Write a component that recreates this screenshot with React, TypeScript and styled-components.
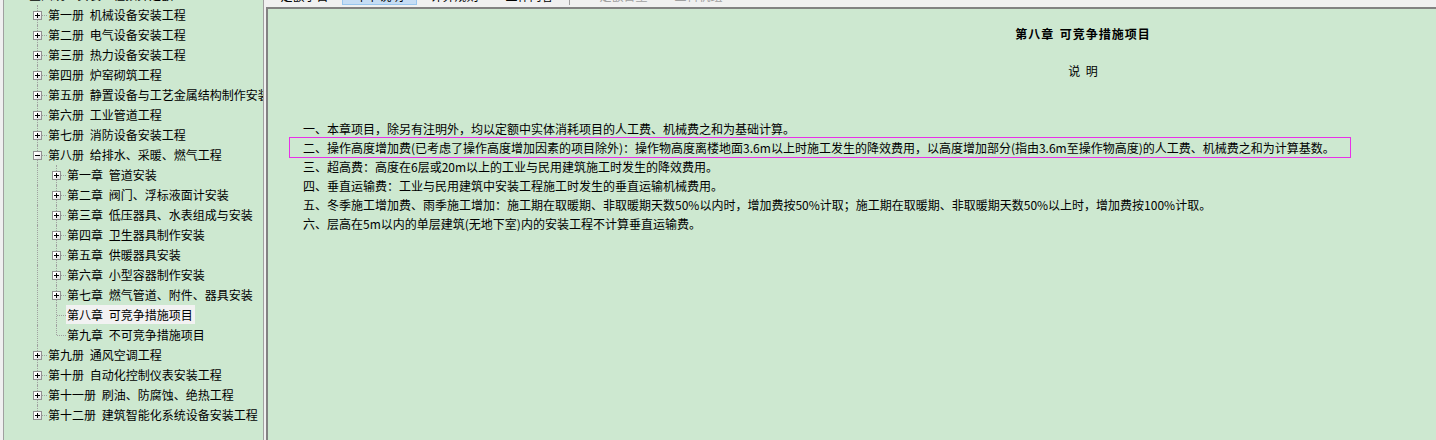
import styled, { createGlobalStyle, css } from 'styled-components';

type TreeNode = {
  label: string,
  children?: TreeNode[],
  open?: boolean,
  selected?: boolean,
};

type FlatRow = {
  node: TreeNode,
  depth: number,
  guides: boolean[],
  last: boolean,
};

const tree: TreeNode = {
  label: '全国统一安装工程预算定额',
  open: true,
  children: [
    { label: '第一册 机械设备安装工程', children: [] },
    { label: '第二册 电气设备安装工程', children: [] },
    { label: '第三册 热力设备安装工程', children: [] },
    { label: '第四册 炉窑砌筑工程', children: [] },
    { label: '第五册 静置设备与工艺金属结构制作安装工程', children: [] },
    { label: '第六册 工业管道工程', children: [] },
    { label: '第七册 消防设备安装工程', children: [] },
    {
      label: '第八册 给排水、采暖、燃气工程',
      open: true,
      children: [
        { label: '第一章 管道安装', children: [] },
        { label: '第二章 阀门、浮标液面计安装', children: [] },
        { label: '第三章 低压器具、水表组成与安装', children: [] },
        { label: '第四章 卫生器具制作安装', children: [] },
        { label: '第五章 供暖器具安装', children: [] },
        { label: '第六章 小型容器制作安装', children: [] },
        { label: '第七章 燃气管道、附件、器具安装', children: [] },
        { label: '第八章 可竞争措施项目', selected: true },
        { label: '第九章 不可竞争措施项目' },
      ],
    },
    { label: '第九册 通风空调工程', children: [] },
    { label: '第十册 自动化控制仪表安装工程', children: [] },
    { label: '第十一册 刷油、防腐蚀、绝热工程', children: [] },
    { label: '第十二册 建筑智能化系统设备安装工程', children: [] },
  ],
};

const tabs = [
  { label: '定额子目' },
  { label: '章节说明', active: true },
  { label: '计算规则' },
  { label: '工作内容' },
];

const disabledTabs = ['定额含量', '工料机组'];

const notes = [
  '一、本章项目，除另有注明外，均以定额中实体消耗项目的人工费、机械费之和为基础计算。',
  '二、操作高度增加费(已考虑了操作高度增加因素的项目除外)：操作物高度离楼地面3.6m以上时施工发生的降效费用，以高度增加部分(指由3.6m至操作物高度)的人工费、机械费之和为计算基数。',
  '三、超高费：高度在6层或20m以上的工业与民用建筑施工时发生的降效费用。',
  '四、垂直运输费：工业与民用建筑中安装工程施工时发生的垂直运输机械费用。',
  '五、冬季施工增加费、雨季施工增加：施工期在取暖期、非取暖期天数50%以内时，增加费按50%计取；施工期在取暖期、非取暖期天数50%以上时，增加费按100%计取。',
  '六、层高在5m以内的单层建筑(无地下室)内的安装工程不计算垂直运输费。',
];

function flatten(node: TreeNode, depth: number, guides: boolean[], last: boolean, out: FlatRow[]) {
  out.push({ node, depth, guides, last });
  if (node.open && node.children) {
    node.children.forEach((child, i) => {
      const childLast = i === node.children!.length - 1;
      flatten(child, depth + 1, depth === 0 ? [false] : [...guides, !last], childLast, out);
    });
  }
  return out;
}

export default function App() {
  const rows = flatten(tree, 0, [], true, []);

  return (
    <Screen>
      <GlobalStyle />
      <TreePane>
        <TreeScroll>
          {rows.map((r) => (
            <Row key={r.node.label}>
              {r.guides.map((g, i) => (
                <Guide key={`g-${i}`} $line={g} />
              ))}
              <Connector $last={r.last} $bare={r.depth === 0}>
                {r.node.children && <Expander $open={!!r.node.open} />}
              </Connector>
              <Label $selected={!!r.node.selected}>{r.node.label}</Label>
            </Row>
          ))}
        </TreeScroll>
      </TreePane>
      <Main>
        <Toolbar>
          {tabs.map((t) => (
            <Tab key={t.label} $active={!!t.active}>{t.label}</Tab>
          ))}
          <Separator />
          {disabledTabs.map((t) => (
            <Tab key={t} $disabled>{t}</Tab>
          ))}
        </Toolbar>
        <Content>
          <Document>
            <Heading>第八章 可竞争措施项目</Heading>
            <SubHeading>说 明</SubHeading>
            <NoteList>
              {notes.map((n, i) => (
                <Note key={`note-${i}`} $focused={i === 1}>{n}</Note>
              ))}
            </NoteList>
          </Document>
        </Content>
      </Main>
    </Screen>
  );
}

const GlobalStyle = createGlobalStyle`
  html, body {
    margin:0;
    padding:0;
    overflow:hidden;
    background:#f0f0f0;
  }
  body {
    font-family: "Noto Sans CJK SC", "Liberation Sans", sans-serif;
    font-size:12px;
    color:#000;
  }
`;

const Screen = styled.div`
  display:flex;
  height:440px;
  width:1436px;
  background:#f0f0f0;
  overflow:hidden;
`;

const TreePane = styled.div`
  margin-left:3px;
  width:259px;
  flex-shrink:0;
  height:440px;
  background:#cde8d0;
  border-left:1px solid #a0a0a0;
  border-right:1px solid #a0a0a0;
  overflow:hidden;
`;

const TreeScroll = styled.div`
  margin-top:-15px;
  margin-left:-4px;
`;

const Row = styled.div`
  display:flex;
  align-items:flex-start;
  height:20px;
  padding-left:9px;
  white-space:nowrap;
`;

const dotted = '1px dotted #a0a0a0';

const Guide = styled.span<{ $line: boolean }>`
  position:relative;
  flex:0 0 19px;
  height:20px;
  ${(p) => p.$line && css`
    &::before {
      content:'';
      position:absolute;
      left:9px;
      top:0;
      bottom:0;
      border-left:${dotted};
    }
  `}
`;

const Connector = styled.span<{ $last: boolean, $bare: boolean }>`
  position:relative;
  flex:0 0 19px;
  height:20px;
  ${(p) => !p.$bare && css`
    &::before {
      content:'';
      position:absolute;
      left:9px;
      top:0;
      height:${p.$last ? '10px' : '20px'};
      border-left:${dotted};
    }
    &::after {
      content:'';
      position:absolute;
      left:10px;
      right:0;
      top:10px;
      border-top:${dotted};
    }
  `}
`;

const Expander = styled.span<{ $open: boolean }>`
  position:absolute;
  z-index:1;
  left:5px;
  top:6px;
  width:9px;
  height:9px;
  box-sizing:border-box;
  border:1px solid #919191;
  background:linear-gradient(135deg, #ffffff 30%, #dcdcdc);
  &::before {
    content:'';
    position:absolute;
    left:1px;
    top:3px;
    width:5px;
    height:1px;
    background:#000;
  }
  ${(p) => !p.$open && css`
    &::after {
      content:'';
      position:absolute;
      left:3px;
      top:1px;
      width:1px;
      height:5px;
      background:#000;
    }
  `}
`;

const Label = styled.span<{ $selected: boolean }>`
  height:19px;
  line-height:19px;
  padding:0 2px 0 1px;
  word-spacing:3px;
  background:${(p) => (p.$selected ? '#f2f2f2' : 'transparent')};
`;

const Main = styled.div`
  flex:1;
  display:flex;
  flex-direction:column;
  margin-left:2px;
  min-width:0;
`;

const Toolbar = styled.div`
  height:7px;
  box-sizing:border-box;
  padding-bottom:2px;
  display:flex;
  align-items:flex-end;
  overflow:hidden;
  flex-shrink:0;
`;

const Tab = styled.div<{ $active?: boolean, $disabled?: boolean }>`
  flex:0 0 75px;
  height:21px;
  box-sizing:border-box;
  display:flex;
  align-items:flex-end;
  justify-content:center;
  padding-bottom:1px;
  line-height:14px;
  color:${(p) => (p.$disabled ? '#a0a0a0' : '#000')};
  border:1px solid ${(p) => (p.$active ? '#99c6ee' : 'transparent')};
  background:${(p) => (p.$active ? '#c6ddf4' : 'transparent')};
  &:first-child {
    margin-left:1px;
  }
`;

const Separator = styled.div`
  width:1px;
  height:21px;
  margin:0 16px 0 2px;
  background:#a0a0a0;
`;

const Content = styled.div`
  flex:1;
  background:#cde8d0;
  border-top:2px solid #828282;
  border-left:2px solid #828282;
  overflow:hidden;
`;

const Document = styled.div`
  width:1630px;
  padding-top:15px;
`;

const Heading = styled.div`
  text-align:center;
  font-weight:bold;
  line-height:19px;
  letter-spacing:1px;
  word-spacing:2px;
`;

const SubHeading = styled.div`
  margin-top:18px;
  text-align:center;
  line-height:19px;
  word-spacing:3px;
`;

const NoteList = styled.div`
  margin-top:39px;
  margin-left:22px;
  display:flex;
  flex-direction:column;
`;

const Note = styled.div<{ $focused: boolean }>`
  width:1060px;
  height:19px;
  line-height:19px;
  box-sizing:border-box;
  padding-left:13px;
  white-space:nowrap;
  outline:${(p) => (p.$focused ? '1px solid #e830e8' : 'none')};
`;
